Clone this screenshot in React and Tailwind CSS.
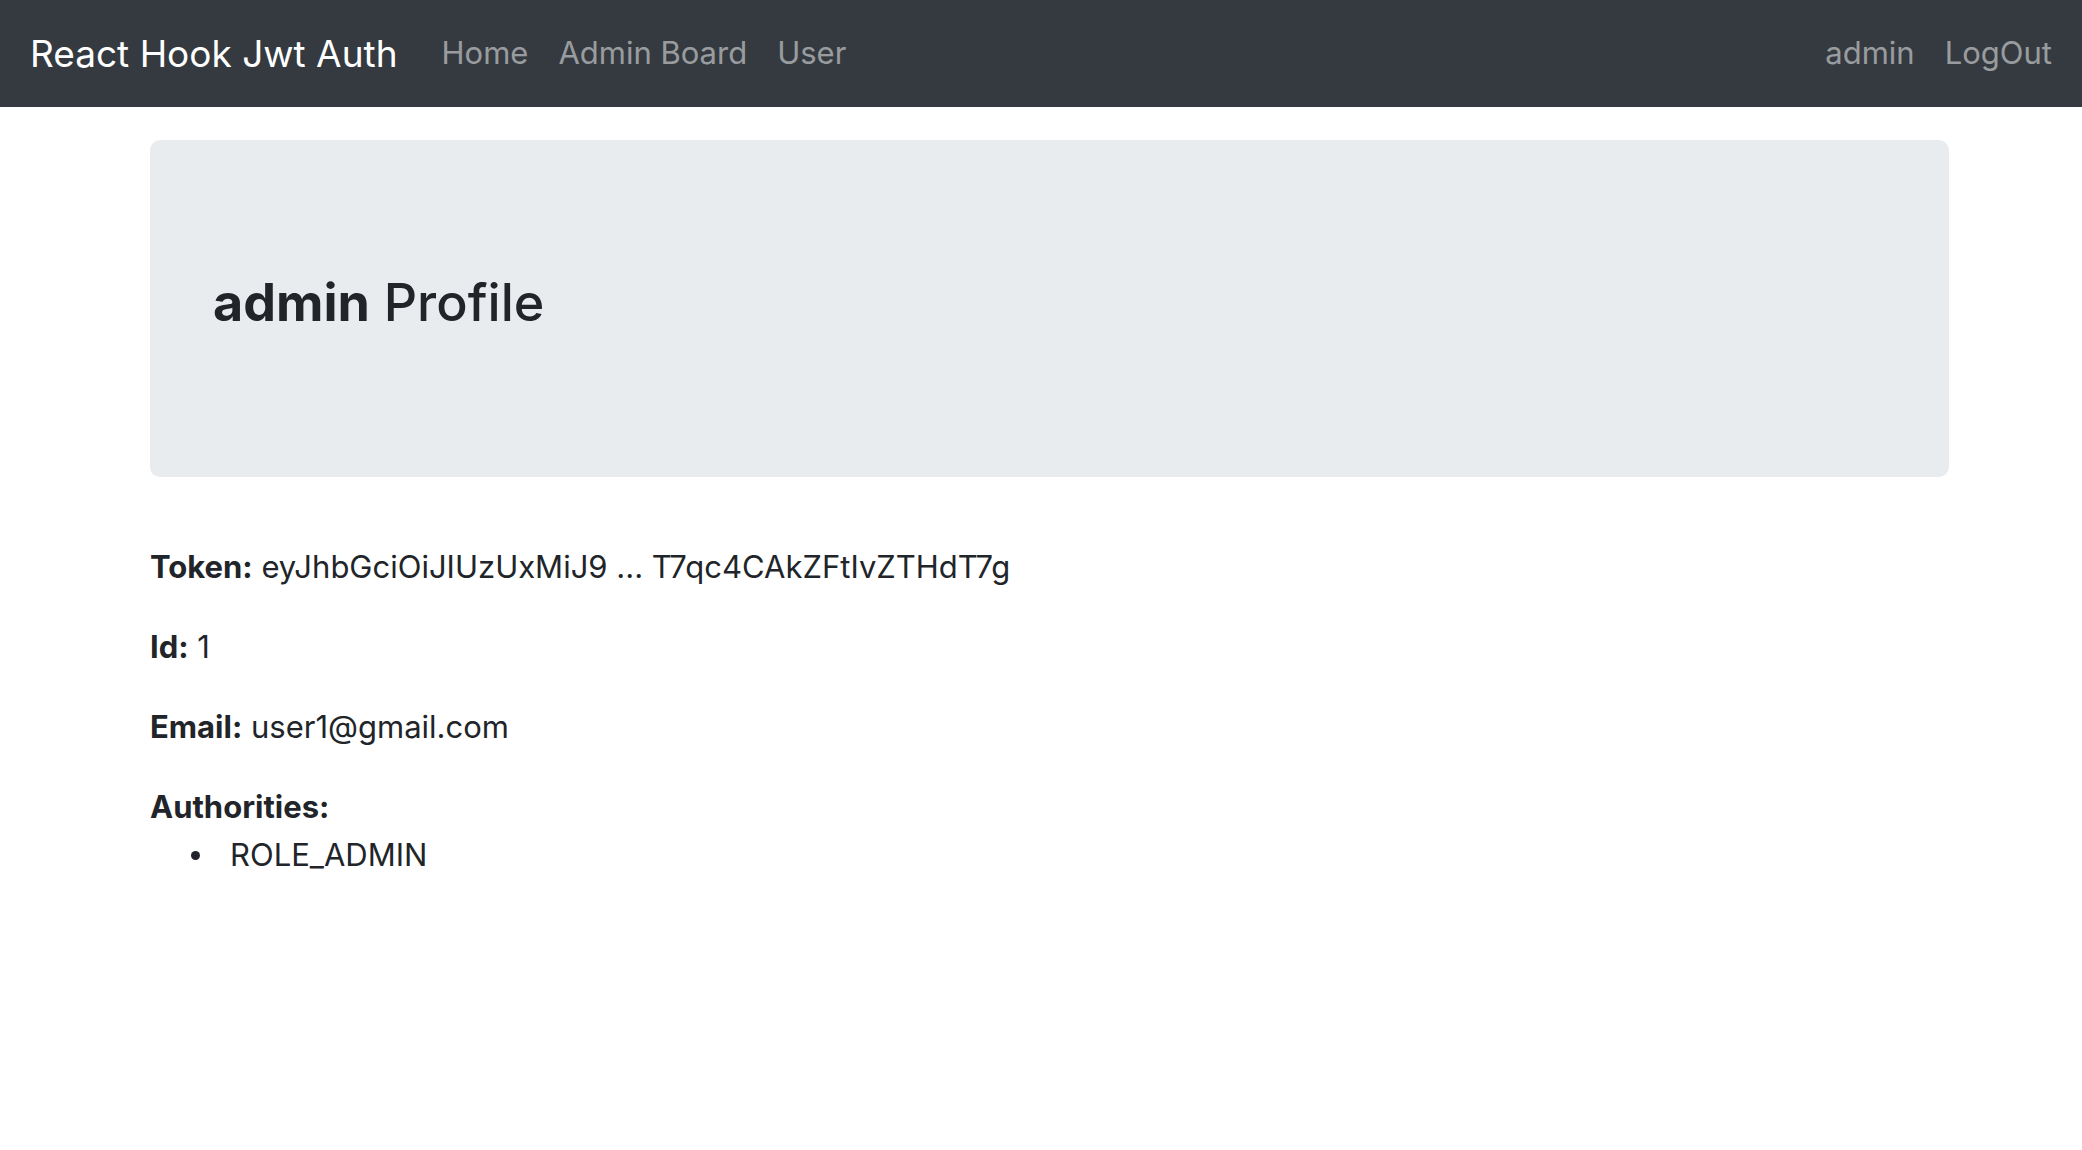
import React from "react";

export default function App() {
  const font = { fontFamily: "Inter, 'Noto Sans', sans-serif" };
  return (
    <div className="min-h-screen w-full bg-white text-[#212529]" style={font}>
      {/* navbar */}
      <nav className="flex h-[107px] items-center bg-[#343a40] px-[30px]">
        <a className="mr-[29px] text-[37px] leading-[57px] text-white">React Hook Jwt Auth</a>
        <div className="flex">
          <a className="px-[15px] text-[31px] text-white/50">Home</a>
          <a className="px-[15px] text-[31px] text-white/50">Admin Board</a>
          <a className="px-[15px] text-[31px] text-white/50">User</a>
        </div>
        <div className="ml-auto flex">
          <a className="px-[15px] text-[31px] text-white/50">admin</a>
          <a className="pl-[15px] text-[31px] text-white/50">LogOut</a>
        </div>
      </nav>

      {/* profile */}
      <div className="ml-[150px] w-[1799px] pt-[33px]">
        <header className="mb-[66px] h-[337px] rounded-[10px] bg-[#e9ecef] px-[63px] pt-[131px]">
          <h3 className="text-[52px] leading-[64px] font-medium">
            <strong className="font-bold">admin</strong> Profile
          </h3>
        </header>
        <p className="mb-[32px] text-[31px] leading-[48px]">
          <strong className="font-bold">Token:</strong> eyJhbGciOiJIUzUxMiJ9 ... T7qc4CAkZFtIvZTHdT7g
        </p>
        <p className="mb-[32px] text-[31px] leading-[48px]">
          <strong className="font-bold">Id:</strong> 1
        </p>
        <p className="mb-[32px] text-[31px] leading-[48px]">
          <strong className="font-bold">Email:</strong> user1@gmail.com
        </p>
        <strong className="block text-[31px] leading-[48px] font-bold">Authorities:</strong>
        <ul className="pl-[41px] text-[31px] leading-[48px]">
          <li className="flex items-center">
            <span className="mr-[30px] h-[9px] w-[9px] rounded-full bg-[#212529]" />
            ROLE_ADMIN
          </li>
        </ul>
      </div>
    </div>
  );
}
